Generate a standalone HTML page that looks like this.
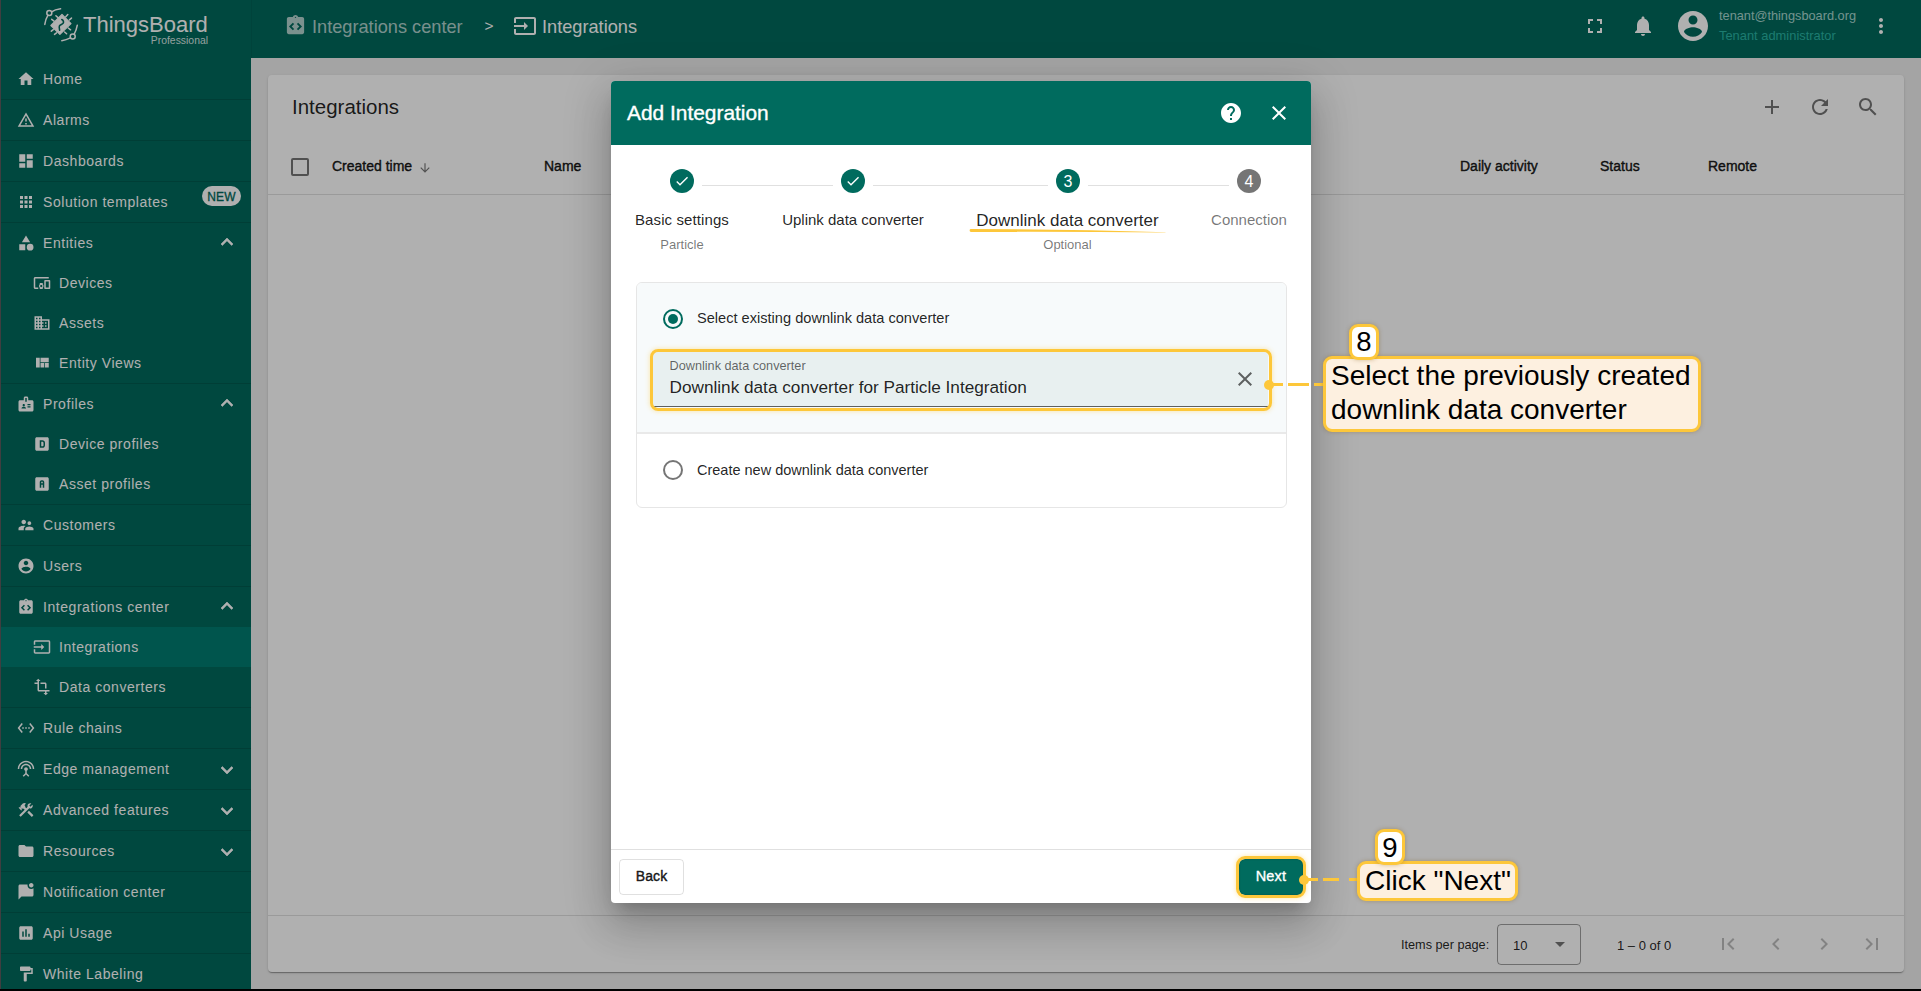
<!DOCTYPE html>
<html><head><meta charset="utf-8">
<style>
*{box-sizing:border-box;margin:0;padding:0}
html,body{width:1921px;height:991px;overflow:hidden;background:#000;font-family:"Liberation Sans",sans-serif}
.a{position:absolute}
.t{position:absolute;white-space:nowrap;line-height:1}
svg{position:absolute;display:block;overflow:visible}
</style></head><body>

<div class="a" style="left:0;top:0;width:1921px;height:989px;background:#eeeeee;overflow:hidden">
<div class="a" style="left:1px;top:0px;width:1920px;height:58px;background:#00695c"></div>
<div class="a" style="left:1px;top:58px;width:250px;height:931px;background:#00695c"></div>
<div class="a" style="left:0px;top:0px;width:1px;height:989px;background:#6a6a6a"></div>
<svg style="left:40px;top:5px;width:45px;height:40px" viewBox="0 0 45 40">
<g fill="none" stroke="#fff" stroke-width="1.5" stroke-linecap="round">
<circle cx="9.3" cy="8.1" r="2.5"/><circle cx="32.7" cy="31.4" r="2.5"/>
<path d="M11.6 6.8 Q15 4.6 20.6 3.8"/><path d="M7.9 10.4 Q5.6 14 4.8 19.4"/>
<path d="M34.2 29.1 Q36.4 25.2 37.3 20.2"/><path d="M30.4 32.8 Q26.2 35 21.8 35.7"/>
<path d="M15.9 10.7L18.3 12.9M11.7 14.3L14.1 16.1M27.8 9.5L25.8 11.7M31.5 13.1L29.4 14.9M11.3 26.2L13.3 24.6M14.5 29.4L16.5 27.8M30.6 24.8L28.2 23M26.6 28.8L24.6 27"/>
</g>
<path d="M22 9.4 L31 18.6 L19.9 29.4 L10.9 20.5 Z" fill="#fff" stroke="#fff" stroke-width="1.2" stroke-linejoin="round"/>
<path d="M21.8 14.6 C23.2 15.2 24 16.8 23.2 18.2 C22.6 19.3 20.6 19.6 19.6 20.6 C19 21.4 19.2 23.4 19.6 25.2" fill="none" stroke="#00695c" stroke-width="1.6" stroke-linecap="round"/>
</svg>
<div class="t" style="left:83px;top:14.38px;font-size:22px;color:#fff;font-weight:400;letter-spacing:0px;">ThingsBoard</div>
<div class="t" style="left:-392px;width:600px;text-align:right;top:36.40px;font-size:10.4px;color:rgba(255,255,255,0.85);font-weight:400;letter-spacing:0px;">Professional</div>
<svg style="left:283.5px;top:14px;width:23px;height:23px" viewBox="0 0 24 24"><path fill="rgba(255,255,255,0.7)" d="M19 3h-4.18C14.4 1.84 13.3 1 12 1s-2.4.84-2.82 2H5c-1.1 0-2 .9-2 2v14c0 1.1.9 2 2 2h14c1.1 0 2-.9 2-2V5c0-1.1-.9-2-2-2zM12 2.75c.41 0 .75.34.75.75s-.34.75-.75.75-.75-.34-.75-.75.34-.75.75-.75zM10.6 15.6L9.2 17l-4-4 4-4 1.4 1.4L8 13l2.6 2.6zm4.2 1.4l-1.4-1.4L16 13l-2.6-2.6L14.8 9l4 4-4 4z"/></svg>
<div class="t" style="left:312px;top:17.59px;font-size:18.2px;color:rgba(255,255,255,0.7);font-weight:400;letter-spacing:0px;">Integrations center</div>
<div class="t" style="left:189px;width:600px;text-align:center;top:18.38px;font-size:15.5px;color:#fff;font-weight:400;letter-spacing:0px;">&gt;</div>
<svg style="left:513px;top:14px;width:24px;height:24px" viewBox="0 0 24 24"><path fill="#fff" d="M21 3.01H3c-1.1 0-2 .9-2 2V9h2V4.99h18v14.03H3V15H1v4.01c0 1.1.9 1.98 2 1.98h18c1.1 0 2-.88 2-1.98v-14c0-1.11-.9-2-2-2zM11 16l4-4-4-4v3H1v2h10v3z"/></svg>
<div class="t" style="left:542px;top:17.59px;font-size:18.2px;color:#fff;font-weight:400;letter-spacing:0px;">Integrations</div>
<svg style="left:1583px;top:14px;width:24px;height:24px" viewBox="0 0 24 24"><path fill="#fff" d="M7 14H5v5h5v-2H7v-3zm-2-4h2V7h3V5H5v5zm12 7h-3v2h5v-5h-2v3zM14 5v2h3v3h2V5h-5z"/></svg>
<svg style="left:1631px;top:14px;width:24px;height:24px" viewBox="0 0 24 24"><path fill="#fff" d="M12 22c1.1 0 2-.9 2-2h-4c0 1.1.89 2 2 2zm6-6v-5c0-3.07-1.64-5.64-4.5-6.32V4c0-.83-.67-1.5-1.5-1.5s-1.5.67-1.5 1.5v.68C7.63 5.36 6 7.92 6 11v5l-2 2v1h16v-1l-2-2z"/></svg>
<svg style="left:1675px;top:8px;width:36px;height:36px" viewBox="0 0 24 24"><path fill="#fff" d="M12 2C6.48 2 2 6.48 2 12s4.48 10 10 10 10-4.48 10-10S17.52 2 12 2zm0 3c1.66 0 3 1.34 3 3s-1.34 3-3 3-3-1.34-3-3 1.34-3 3-3zm0 14.2c-2.5 0-4.71-1.28-6-3.22.03-1.99 4-3.08 6-3.08 1.99 0 5.970 1.09 6 3.08-1.29 1.94-3.5 3.22-6 3.22z"/></svg>
<div class="t" style="left:1719px;top:10.21px;font-size:12.75px;color:#a8d6cf;font-weight:400;letter-spacing:0px;">tenant@thingsboard.org</div>
<div class="t" style="left:1719px;top:29.58px;font-size:12.9px;color:#2ab3a3;font-weight:400;letter-spacing:0px;">Tenant administrator</div>
<svg style="left:1869px;top:14px;width:24px;height:24px" viewBox="0 0 24 24"><path fill="#fff" d="M12 8c1.1 0 2-.9 2-2s-.9-2-2-2-2 .9-2 2 .9 2 2 2zm0 2c-1.1 0-2 .9-2 2s.9 2 2 2 2-.9 2-2-.9-2-2-2zm0 6c-1.1 0-2 .9-2 2s.9 2 2 2 2-.9 2-2-.9-2-2-2z"/></svg>
<div class="a" style="left:251px;top:0px;width:1px;height:58px;background:rgba(0,0,0,0.06)"></div>
<div class="a" style="left:1px;top:99px;width:250px;height:1px;background:rgba(0,0,0,0.14)"></div>
<div class="a" style="left:1px;top:140px;width:250px;height:1px;background:rgba(0,0,0,0.14)"></div>
<div class="a" style="left:1px;top:181px;width:250px;height:1px;background:rgba(0,0,0,0.14)"></div>
<div class="a" style="left:1px;top:222px;width:250px;height:1px;background:rgba(0,0,0,0.14)"></div>
<div class="a" style="left:1px;top:383px;width:250px;height:1px;background:rgba(0,0,0,0.14)"></div>
<div class="a" style="left:1px;top:504px;width:250px;height:1px;background:rgba(0,0,0,0.14)"></div>
<div class="a" style="left:1px;top:545px;width:250px;height:1px;background:rgba(0,0,0,0.14)"></div>
<div class="a" style="left:1px;top:586px;width:250px;height:1px;background:rgba(0,0,0,0.14)"></div>
<div class="a" style="left:1px;top:707px;width:250px;height:1px;background:rgba(0,0,0,0.14)"></div>
<div class="a" style="left:1px;top:748px;width:250px;height:1px;background:rgba(0,0,0,0.14)"></div>
<div class="a" style="left:1px;top:789px;width:250px;height:1px;background:rgba(0,0,0,0.14)"></div>
<div class="a" style="left:1px;top:830px;width:250px;height:1px;background:rgba(0,0,0,0.14)"></div>
<div class="a" style="left:1px;top:871px;width:250px;height:1px;background:rgba(0,0,0,0.14)"></div>
<div class="a" style="left:1px;top:912px;width:250px;height:1px;background:rgba(0,0,0,0.14)"></div>
<div class="a" style="left:1px;top:953px;width:250px;height:1px;background:rgba(0,0,0,0.14)"></div>
<div class="a" style="left:1px;top:627px;width:250px;height:40px;background:#007c70"></div>
<svg style="left:17px;top:70px;width:18px;height:18px" viewBox="0 0 24 24"><path fill="#fff" d="M10 20v-6h4v6h5v-8h3L12 3 2 12h3v8z"/></svg>
<div class="t" style="left:43px;top:72.15px;font-size:14px;color:#fff;font-weight:400;letter-spacing:0.55px;">Home</div>
<svg style="left:17px;top:111px;width:18px;height:18px" viewBox="0 0 24 24"><path fill="#fff" d="M12 5.99L19.53 19H4.47L12 5.99M12 2L1 21h22L12 2zm1 14h-2v2h2v-2zm0-6h-2v4h2v-4z"/></svg>
<div class="t" style="left:43px;top:113.15px;font-size:14px;color:#fff;font-weight:400;letter-spacing:0.55px;">Alarms</div>
<svg style="left:17px;top:152px;width:18px;height:18px" viewBox="0 0 24 24"><path fill="#fff" d="M3 13h8V3H3v10zm0 8h8v-6H3v6zm10 0h8V11h-8v10zm0-18v6h8V3h-8z"/></svg>
<div class="t" style="left:43px;top:154.15px;font-size:14px;color:#fff;font-weight:400;letter-spacing:0.55px;">Dashboards</div>
<svg style="left:17px;top:193px;width:18px;height:18px" viewBox="0 0 24 24"><path fill="#fff" d="M4 8h4V4H4v4zm6 12h4v-4h-4v4zm-6 0h4v-4H4v4zm0-6h4v-4H4v4zm6 0h4v-4h-4v4zm6-10v4h4V4h-4zm-6 4h4V4h-4v4zm6 6h4v-4h-4v4zm0 6h4v-4h-4v4z"/></svg>
<div class="t" style="left:43px;top:195.15px;font-size:14px;color:#fff;font-weight:400;letter-spacing:0.55px;">Solution templates</div>
<svg style="left:17px;top:234px;width:18px;height:18px" viewBox="0 0 24 24"><path fill="#fff" d="M12 2l-5.5 9h11zM17.5 13a4.5 4.5 0 1 0 0 9a4.5 4.5 0 1 0 0-9zM3 13.5h8v8H3z"/></svg>
<div class="t" style="left:43px;top:236.15px;font-size:14px;color:#fff;font-weight:400;letter-spacing:0.55px;">Entities</div>
<svg style="left:215px;top:230px;width:24px;height:24px" viewBox="0 0 24 24" stroke="#fff" stroke-width="0.6"><path fill="#fff" d="M12 8l-6 6 1.41 1.41L12 10.83l4.59 4.58L18 14z"/></svg>
<svg style="left:33px;top:274px;width:18px;height:18px" viewBox="0 0 24 24"><path fill="#fff" d="M3 6h18V4H3c-1.1 0-2 .9-2 2v12c0 1.1.9 2 2 2h4v-2H3V6zm10 6H9v1.78c-.61.55-1 1.33-1 2.22s.39 1.67 1 2.22V20h4v-1.78c.61-.55 1-1.34 1-2.22s-.39-1.67-1-2.22V12zm-2 5.5c-.83 0-1.5-.67-1.5-1.5s.67-1.5 1.5-1.5 1.5.67 1.5 1.5-.67 1.5-1.5 1.5zM22 8h-6c-.5 0-1 .5-1 1v10c0 .5.5 1 1 1h6c.5 0 1-.5 1-1V9c0-.5-.5-1-1-1zm-1 10h-4v-8h4v8z"/></svg>
<div class="t" style="left:59px;top:276.15px;font-size:14px;color:#fff;font-weight:400;letter-spacing:0.55px;">Devices</div>
<svg style="left:33px;top:314px;width:18px;height:18px" viewBox="0 0 24 24"><path fill="#fff" d="M12 7V3H2v18h20V7H12zM6 19H4v-2h2v2zm0-4H4v-2h2v2zm0-4H4V9h2v2zm0-4H4V5h2v2zm4 12H8v-2h2v2zm0-4H8v-2h2v2zm0-4H8V9h2v2zm0-4H8V5h2v2zm10 12h-8v-2h2v-2h-2v-2h2v-2h-2V9h8v10zm-2-8h-2v2h2v-2zm0 4h-2v2h2v-2z"/></svg>
<div class="t" style="left:59px;top:316.15px;font-size:14px;color:#fff;font-weight:400;letter-spacing:0.55px;">Assets</div>
<svg style="left:33px;top:354px;width:18px;height:18px" viewBox="0 0 24 24"><path fill="#fff" d="M10 18h5v-6h-5v6zm-6 0h5V5H4v13zm12 0h5v-6h-5v6zM10 5v6h11V5H10z"/></svg>
<div class="t" style="left:59px;top:356.15px;font-size:14px;color:#fff;font-weight:400;letter-spacing:0.55px;">Entity Views</div>
<svg style="left:17px;top:395px;width:18px;height:18px" viewBox="0 0 24 24"><path fill="#fff" d="M20 7h-5V4c0-1.1-.9-2-2-2h-2c-1.1 0-2 .9-2 2v3H4c-1.1 0-2 .9-2 2v11c0 1.1.9 2 2 2h16c1.1 0 2-.9 2-2V9c0-1.1-.9-2-2-2zM9 12c.83 0 1.5.67 1.5 1.5S9.830 15 9 15s-1.5-.67-1.5-1.5S8.17 12 9 12zm3 6H6v-.43c0-.6.36-1.15.92-1.39.64-.28 1.34-.43 2.08-.43s1.44.15 2.08.43c.55.24.92.78.92 1.39V18zm1-9h-2V4h2v5zm5 7.5h-4V15h4v1.5zm0-3h-4V12h4v1.5z"/></svg>
<div class="t" style="left:43px;top:397.15px;font-size:14px;color:#fff;font-weight:400;letter-spacing:0.55px;">Profiles</div>
<svg style="left:215px;top:391px;width:24px;height:24px" viewBox="0 0 24 24" stroke="#fff" stroke-width="0.6"><path fill="#fff" d="M12 8l-6 6 1.41 1.41L12 10.83l4.59 4.58L18 14z"/></svg>
<svg style="left:33px;top:435px;width:18px;height:18px" viewBox="0 0 24 24"><path fill="#fff" d="M5 3h14c1.1 0 2 .9 2 2v14c0 1.1-.9 2-2 2H5c-1.1 0-2-.9-2-2V5c0-1.1.9-2 2-2zM9 7v10h3.5c2 0 3.5-1.5 3.5-3.5v-3C16 8.5 14.5 7 12.5 7H9zm2 2h1.5c.8 0 1.5.7 1.5 1.5v3c0 .8-.7 1.5-1.5 1.5H11V9z"/></svg>
<div class="t" style="left:59px;top:437.15px;font-size:14px;color:#fff;font-weight:400;letter-spacing:0.55px;">Device profiles</div>
<svg style="left:33px;top:475px;width:18px;height:18px" viewBox="0 0 24 24"><path fill="#fff" d="M5 3h14c1.1 0 2 .9 2 2v14c0 1.1-.9 2-2 2H5c-1.1 0-2-.9-2-2V5c0-1.1.9-2 2-2zM9 17h2v-4h2v4h2V9.5C15 8.1 13.9 7 12.5 7h-1C10.1 7 9 8.1 9 9.5V17zm2-6V9.5c0-.3.2-.5.5-.5h1c.3 0 .5.2.5.5V11h-2z"/></svg>
<div class="t" style="left:59px;top:477.15px;font-size:14px;color:#fff;font-weight:400;letter-spacing:0.55px;">Asset profiles</div>
<svg style="left:17px;top:516px;width:18px;height:18px" viewBox="0 0 24 24"><path fill="#fff" d="M16.5 12c1.38 0 2.49-1.12 2.49-2.5S17.88 7 16.5 7C15.12 7 14 8.12 14 9.5s1.12 2.5 2.5 2.5zM9 11c1.66 0 2.99-1.34 2.99-3S10.66 5 9 5C7.34 5 6 6.34 6 8s1.34 3 3 3zm7.5 3c-1.83 0-5.5.92-5.5 2.75V19h11v-2.25c0-1.830-3.67-2.75-5.5-2.75zM9 13c-2.33 0-7 1.17-7 3.5V19h7v-2.25c0-.85.33-2.34 2.37-3.47C10.5 13.1 9.66 13 9 13z"/></svg>
<div class="t" style="left:43px;top:518.15px;font-size:14px;color:#fff;font-weight:400;letter-spacing:0.55px;">Customers</div>
<svg style="left:17px;top:557px;width:18px;height:18px" viewBox="0 0 24 24"><path fill="#fff" d="M12 2C6.48 2 2 6.48 2 12s4.48 10 10 10 10-4.48 10-10S17.52 2 12 2zm0 3c1.66 0 3 1.34 3 3s-1.34 3-3 3-3-1.34-3-3 1.34-3 3-3zm0 14.2c-2.5 0-4.71-1.28-6-3.22.03-1.99 4-3.08 6-3.08 1.99 0 5.970 1.09 6 3.08-1.29 1.94-3.5 3.22-6 3.22z"/></svg>
<div class="t" style="left:43px;top:559.15px;font-size:14px;color:#fff;font-weight:400;letter-spacing:0.55px;">Users</div>
<svg style="left:17px;top:598px;width:18px;height:18px" viewBox="0 0 24 24"><path fill="#fff" d="M19 3h-4.18C14.4 1.84 13.3 1 12 1s-2.4.84-2.82 2H5c-1.1 0-2 .9-2 2v14c0 1.1.9 2 2 2h14c1.1 0 2-.9 2-2V5c0-1.1-.9-2-2-2zM12 2.75c.41 0 .75.34.75.75s-.34.75-.75.75-.75-.34-.75-.75.34-.75.75-.75zM10.6 15.6L9.2 17l-4-4 4-4 1.4 1.4L8 13l2.6 2.6zm4.2 1.4l-1.4-1.4L16 13l-2.6-2.6L14.8 9l4 4-4 4z"/></svg>
<div class="t" style="left:43px;top:600.15px;font-size:14px;color:#fff;font-weight:400;letter-spacing:0.55px;">Integrations center</div>
<svg style="left:215px;top:594px;width:24px;height:24px" viewBox="0 0 24 24" stroke="#fff" stroke-width="0.6"><path fill="#fff" d="M12 8l-6 6 1.41 1.41L12 10.83l4.59 4.58L18 14z"/></svg>
<svg style="left:33px;top:638px;width:18px;height:18px" viewBox="0 0 24 24"><path fill="#fff" d="M21 3.01H3c-1.1 0-2 .9-2 2V9h2V4.99h18v14.03H3V15H1v4.01c0 1.1.9 1.98 2 1.98h18c1.1 0 2-.88 2-1.98v-14c0-1.11-.9-2-2-2zM11 16l4-4-4-4v3H1v2h10v3z"/></svg>
<div class="t" style="left:59px;top:640.15px;font-size:14px;color:#fff;font-weight:400;letter-spacing:0.55px;">Integrations</div>
<svg style="left:33px;top:678px;width:18px;height:18px" viewBox="0 0 24 24"><path fill="#fff" d="M22 18v-2H8V4h2L7 1 4 4h2v2H2v2h4v8c0 1.1.9 2 2 2h8v2h-2l3 3 3-3h-2v-2h4zM10 8h6v6h2V8c0-1.1-.9-2-2-2h-6v2z"/></svg>
<div class="t" style="left:59px;top:680.15px;font-size:14px;color:#fff;font-weight:400;letter-spacing:0.55px;">Data converters</div>
<svg style="left:17px;top:719px;width:18px;height:18px" viewBox="0 0 24 24"><path fill="#fff" d="M7.77 6.76L6.23 5.48.82 12l5.41 6.52 1.54-1.28L3.42 12l4.35-5.24zM7 13h2v-2H7v2zm10-2h-2v2h2v-2zm-6 2h2v-2h-2v2zm6.77-7.52l-1.54 1.28L20.58 12l-4.35 5.24 1.54 1.28L23.18 12l-5.41-6.52z"/></svg>
<div class="t" style="left:43px;top:721.15px;font-size:14px;color:#fff;font-weight:400;letter-spacing:0.55px;">Rule chains</div>
<svg style="left:17px;top:760px;width:18px;height:18px" viewBox="0 0 24 24"><path fill="#fff" d="M12 5c-3.87 0-7 3.13-7 7h2c0-2.76 2.24-5 5-5s5 2.24 5 5h2c0-3.87-3.13-7-7-7zm1 9.29c.88-.39 1.5-1.26 1.5-2.29 0-1.38-1.12-2.5-2.5-2.5S9.5 10.62 9.5 12c0 1.02.62 1.9 1.5 2.29v3.3L7.59 21 9 22.41l3-3 3 3L16.41 21 13 17.59v-3.3zM12 1C5.93 1 1 5.93 1 12h2c0-4.97 4.03-9 9-9s9 4.03 9 9h2c0-6.07-4.93-11-11-11z"/></svg>
<div class="t" style="left:43px;top:762.15px;font-size:14px;color:#fff;font-weight:400;letter-spacing:0.55px;">Edge management</div>
<svg style="left:215px;top:757.5px;width:24px;height:24px" viewBox="0 0 24 24" stroke="#fff" stroke-width="0.6"><path fill="#fff" d="M16.59 8.59L12 13.17 7.41 8.59 6 10l6 6 6-6z"/></svg>
<svg style="left:17px;top:801px;width:18px;height:18px" viewBox="0 0 24 24"><path fill="#fff" d="M13.78 15.3l6 6 2.11-2.16-6-6zM17.5 10c1.93 0 3.5-1.57 3.5-3.5 0-.58-.16-1.12-.41-1.6l-2.7 2.7-1.49-1.49 2.7-2.7c-.48-.25-1.02-.41-1.6-.41C15.57 3 14 4.57 14 6.5c0 .41.08.8.21 1.16l-1.85 1.85-1.78-1.78.71-.71-1.41-1.41L12 3.49c-1.17-1.17-3.07-1.17-4.24 0L4.22 7.03l1.41 1.41H2.81l-.71.71 3.54 3.54.71-.71V9.15l1.41 1.41.71-.71 1.78 1.78-7.41 7.41 2.12 2.12L16.34 9.79c.36.13.75.21 1.16.21z"/></svg>
<div class="t" style="left:43px;top:803.15px;font-size:14px;color:#fff;font-weight:400;letter-spacing:0.55px;">Advanced features</div>
<svg style="left:215px;top:798.5px;width:24px;height:24px" viewBox="0 0 24 24" stroke="#fff" stroke-width="0.6"><path fill="#fff" d="M16.59 8.59L12 13.17 7.41 8.59 6 10l6 6 6-6z"/></svg>
<svg style="left:17px;top:842px;width:18px;height:18px" viewBox="0 0 24 24"><path fill="#fff" d="M10 4H4c-1.1 0-1.99.9-1.99 2L2 18c0 1.1.9 2 2 2h16c1.1 0 2-.9 2-2V8c0-1.1-.9-2-2-2h-8l-2-2z"/></svg>
<div class="t" style="left:43px;top:844.15px;font-size:14px;color:#fff;font-weight:400;letter-spacing:0.55px;">Resources</div>
<svg style="left:215px;top:839.5px;width:24px;height:24px" viewBox="0 0 24 24" stroke="#fff" stroke-width="0.6"><path fill="#fff" d="M16.59 8.59L12 13.17 7.41 8.59 6 10l6 6 6-6z"/></svg>
<svg style="left:17px;top:883px;width:18px;height:18px" viewBox="0 0 24 24"><path fill="#fff" d="M22 6.98V16c0 1.1-.9 2-2 2H6l-4 4V4c0-1.1.9-2 2-2h10.1c-.06.32-.1.66-.1 1 0 2.76 2.24 5 5 5 1.13 0 2.16-.39 3-1.02zM16 3c0 1.66 1.34 3 3 3s3-1.34 3-3-1.34-3-3-3-3 1.34-3 3z"/></svg>
<div class="t" style="left:43px;top:885.15px;font-size:14px;color:#fff;font-weight:400;letter-spacing:0.55px;">Notification center</div>
<svg style="left:17px;top:924px;width:18px;height:18px" viewBox="0 0 24 24"><path fill="#fff" d="M19 3H5c-1.1 0-2 .9-2 2v14c0 1.1.9 2 2 2h14c1.1 0 2-.9 2-2V5c0-1.1-.9-2-2-2zM9 17H7v-7h2v7zm4 0h-2V7h2v10zm4 0h-2v-4h2v4z"/></svg>
<div class="t" style="left:43px;top:926.15px;font-size:14px;color:#fff;font-weight:400;letter-spacing:0.55px;">Api Usage</div>
<svg style="left:17px;top:965px;width:18px;height:18px" viewBox="0 0 24 24"><path fill="#fff" d="M18 4V3c0-.55-.45-1-1-1H5c-.55 0-1 .45-1 1v4c0 .55.45 1 1 1h12c.55 0 1-.45 1-1V6h1v4H9v11c0 .55.45 1 1 1h2c.55 0 1-.45 1-1v-9h8V4h-3z"/></svg>
<div class="t" style="left:43px;top:967.15px;font-size:14px;color:#fff;font-weight:400;letter-spacing:0.55px;">White Labeling</div>
<div class="a" style="left:202px;top:186px;width:39px;height:20px;background:#fff;border-radius:10px"></div>
<div class="t" style="left:-78.5px;width:600px;text-align:center;top:190.84px;font-size:12px;color:#00695c;font-weight:400;letter-spacing:0.2px;-webkit-text-stroke:0.3px #00695c">NEW</div>
<div class="a" style="left:268px;top:75px;width:1636px;height:897px;background:#fff;border-radius:4px;box-shadow:0 2px 1px -1px rgba(0,0,0,.2),0 1px 1px 0 rgba(0,0,0,.14),0 1px 3px 0 rgba(0,0,0,.12)"></div>
<div class="t" style="left:292px;top:96.65px;font-size:20.5px;color:rgba(0,0,0,0.87);font-weight:400;letter-spacing:0px;">Integrations</div>
<svg style="left:1760px;top:95px;width:24px;height:24px" viewBox="0 0 24 24"><path fill="rgba(0,0,0,0.54)" d="M19 13h-6v6h-2v-6H5v-2h6V5h2v6h6v2z"/></svg>
<svg style="left:1808px;top:95px;width:24px;height:24px" viewBox="0 0 24 24"><path fill="rgba(0,0,0,0.54)" d="M17.65 6.35C16.2 4.9 14.21 4 12 4c-4.42 0-7.99 3.58-7.99 8s3.57 8 7.99 8c3.73 0 6.84-2.55 7.730-6h-2.08c-.82 2.33-3.04 4-5.65 4-3.31 0-6-2.69-6-6s2.69-6 6-6c1.66 0 3.14.69 4.22 1.78L13 11h7V4l-2.35 2.35z"/></svg>
<svg style="left:1856px;top:95px;width:24px;height:24px" viewBox="0 0 24 24"><path fill="rgba(0,0,0,0.54)" d="M15.5 14h-.79l-.28-.27C15.41 12.59 16 11.11 16 9.5 16 5.91 13.09 3 9.5 3S3 5.91 3 9.5 5.91 16 9.5 16c1.61 0 3.09-.59 4.23-1.57l.27.28v.79l5 4.99L20.49 19l-4.99-5zm-6 0C7.01 14 5 11.99 5 9.5S7.01 5 9.5 5 14 7.01 14 9.5 11.99 14 9.5 14z"/></svg>
<div class="a" style="left:291px;top:158px;width:18px;height:18px;border:2px solid rgba(0,0,0,0.54);border-radius:2px"></div>
<div class="t" style="left:332px;top:159.15px;font-size:14px;color:rgba(0,0,0,0.87);font-weight:400;letter-spacing:0px;-webkit-text-stroke:0.45px rgba(0,0,0,0.87)">Created time</div>
<svg style="left:418px;top:161px;width:14px;height:14px" viewBox="0 0 24 24"><path fill="rgba(0,0,0,0.54)" d="M20 12l-1.41-1.41L13 16.17V4h-2v12.17l-5.58-5.59L4 12l8 8 8-8z"/></svg>
<div class="t" style="left:544px;top:159.15px;font-size:14px;color:rgba(0,0,0,0.87);font-weight:400;letter-spacing:0px;-webkit-text-stroke:0.45px rgba(0,0,0,0.87)">Name</div>
<div class="t" style="left:1460px;top:159.15px;font-size:14px;color:rgba(0,0,0,0.87);font-weight:400;letter-spacing:0px;-webkit-text-stroke:0.45px rgba(0,0,0,0.87)">Daily activity</div>
<div class="t" style="left:1600px;top:159.15px;font-size:14px;color:rgba(0,0,0,0.87);font-weight:400;letter-spacing:0px;-webkit-text-stroke:0.45px rgba(0,0,0,0.87)">Status</div>
<div class="t" style="left:1708px;top:159.15px;font-size:14px;color:rgba(0,0,0,0.87);font-weight:400;letter-spacing:0px;-webkit-text-stroke:0.45px rgba(0,0,0,0.87)">Remote</div>
<div class="a" style="left:268px;top:194px;width:1636px;height:1px;background:rgba(0,0,0,0.12)"></div>
<div class="a" style="left:268px;top:915px;width:1636px;height:1px;background:rgba(0,0,0,0.12)"></div>
<div class="t" style="left:1401px;top:939.25px;font-size:12.7px;color:rgba(0,0,0,0.87);font-weight:400;letter-spacing:0px;">Items per page:</div>
<div class="a" style="left:1497px;top:924px;width:84px;height:41px;border:1px solid rgba(0,0,0,0.38);border-radius:4px"></div>
<div class="t" style="left:1513px;top:939.00px;font-size:13px;color:rgba(0,0,0,0.87);font-weight:400;letter-spacing:0px;">10</div>
<svg style="left:1548px;top:932px;width:24px;height:24px" viewBox="0 0 24 24"><path fill="rgba(0,0,0,0.54)" d="M7 10l5 5 5-5z"/></svg>
<div class="t" style="left:1617px;top:939.00px;font-size:13px;color:rgba(0,0,0,0.87);font-weight:400;letter-spacing:0px;">1 – 0 of 0</div>
<svg style="left:1716px;top:932px;width:24px;height:24px" viewBox="0 0 24 24"><path fill="rgba(0,0,0,0.26)" d="M18.41 16.59L13.82 12l4.59-4.59L17 6l-6 6 6 6zM6 6h2v12H6z"/></svg>
<svg style="left:1764px;top:932px;width:24px;height:24px" viewBox="0 0 24 24"><path fill="rgba(0,0,0,0.26)" d="M15.41 7.41L14 6l-6 6 6 6 1.41-1.41L10.83 12z"/></svg>
<svg style="left:1812px;top:932px;width:24px;height:24px" viewBox="0 0 24 24"><path fill="rgba(0,0,0,0.26)" d="M10 6L8.59 7.41 13.17 12l-4.58 4.59L10 18l6-6z"/></svg>
<svg style="left:1860px;top:932px;width:24px;height:24px" viewBox="0 0 24 24"><path fill="rgba(0,0,0,0.26)" d="M5.59 7.410L10.18 12l-4.59 4.59L7 18l6-6-6-6zM16 6h2v12h-2z"/></svg>
</div>
<div class="a" style="left:0px;top:0px;width:1921px;height:989px;background:rgba(0,0,0,0.31)"></div>
<div class="a" style="left:0px;top:0px;width:1px;height:989px;background:#3f3e40"></div>
<div class="a" style="left:611px;top:81px;width:700px;height:822px;background:#fff;border-radius:4px;overflow:hidden;box-shadow:0 11px 15px -7px rgba(0,0,0,.2),0 24px 38px 3px rgba(0,0,0,.14),0 9px 46px 8px rgba(0,0,0,.12)">
</div>
<div class="a" style="left:611px;top:81px;width:700px;height:64px;background:#006b5e;border-radius:4px 4px 0 0"></div>
<div class="t" style="left:627px;top:103.31px;font-size:20.9px;color:#fff;font-weight:400;letter-spacing:0px;-webkit-text-stroke:0.35px #fff">Add Integration</div>
<svg style="left:1219px;top:101px;width:24px;height:24px" viewBox="0 0 24 24"><path fill="#fff" d="M12 2C6.48 2 2 6.48 2 12s4.48 10 10 10 10-4.48 10-10S17.52 2 12 2zm1 17h-2v-2h2v2zm2.07-7.75l-.9.92C13.45 12.9 13 13.5 13 15h-2v-.5c0-1.1.45-2.1 1.17-2.83l1.24-1.26c.37-.36.59-.86.59-1.41 0-1.1-.9-2-2-2s-2 .9-2 2H8c0-2.21 1.79-4 4-4s4 1.79 4 4c0 .88-.36 1.68-.93 2.25z"/></svg>
<svg style="left:1267px;top:101px;width:24px;height:24px" viewBox="0 0 24 24"><path fill="#fff" d="M19 6.41L17.59 5 12 10.59 6.41 5 5 6.41 10.59 12 5 17.59 6.41 19 12 13.41 17.59 19 19 17.59 13.41 12z"/></svg>
<div class="a" style="left:670px;top:169px;width:24px;height:24px;background:#006b5e;border-radius:50%"></div>
<svg style="left:674px;top:173px;width:16px;height:16px" viewBox="0 0 24 24"><path fill="#fff" d="M9 16.17L4.83 12l-1.42 1.41L9 19 21 7l-1.41-1.41z"/></svg>
<div class="a" style="left:841px;top:169px;width:24px;height:24px;background:#006b5e;border-radius:50%"></div>
<svg style="left:845px;top:173px;width:16px;height:16px" viewBox="0 0 24 24"><path fill="#fff" d="M9 16.17L4.83 12l-1.42 1.41L9 19 21 7l-1.41-1.41z"/></svg>
<div class="a" style="left:1056px;top:169px;width:24px;height:24px;background:#006b5e;border-radius:50%"></div>
<div class="t" style="left:768px;width:600px;text-align:center;top:173.96px;font-size:16px;color:#fff;font-weight:400;letter-spacing:0px;">3</div>
<div class="a" style="left:1237px;top:169px;width:24px;height:24px;background:#757575;border-radius:50%"></div>
<div class="t" style="left:949px;width:600px;text-align:center;top:173.96px;font-size:16px;color:#fff;font-weight:400;letter-spacing:0px;">4</div>
<div class="a" style="left:702px;top:185px;width:131px;height:1px;background:rgba(0,0,0,0.12)"></div>
<div class="a" style="left:873px;top:185px;width:175px;height:1px;background:rgba(0,0,0,0.12)"></div>
<div class="a" style="left:1088px;top:185px;width:141px;height:1px;background:rgba(0,0,0,0.12)"></div>
<div class="t" style="left:382px;width:600px;text-align:center;top:212.30px;font-size:15px;color:rgba(0,0,0,0.87);font-weight:400;letter-spacing:0.1px;">Basic settings</div>
<div class="t" style="left:382px;width:600px;text-align:center;top:237.50px;font-size:13px;color:rgba(0,0,0,0.54);font-weight:400;letter-spacing:0px;">Particle</div>
<div class="t" style="left:553px;width:600px;text-align:center;top:212.30px;font-size:15px;color:rgba(0,0,0,0.87);font-weight:400;letter-spacing:0px;">Uplink data converter</div>
<div class="t" style="left:767.5px;width:600px;text-align:center;top:212.41px;font-size:17px;color:rgba(0,0,0,0.87);font-weight:400;letter-spacing:0px;">Downlink data converter</div>
<div class="t" style="left:767.5px;width:600px;text-align:center;top:237.50px;font-size:13px;color:rgba(0,0,0,0.54);font-weight:400;letter-spacing:0px;">Optional</div>
<div class="t" style="left:949px;width:600px;text-align:center;top:212.10px;font-size:15px;color:rgba(0,0,0,0.54);font-weight:400;letter-spacing:0px;">Connection</div>
<svg style="left:968px;top:226px;width:200px;height:10px" viewBox="0 0 200 10"><path d="M3 3.1 Q100 3.35 197.5 6.2 L197.5 6.6 Q100 5.35 3 5.9 A1.4 1.4 0 0 1 3 3.1Z" fill="#fdc73a"/></svg>
<div class="a" style="left:636px;top:282px;width:651px;height:226px;border:1px solid #e6e6e6;border-radius:6px;overflow:hidden"></div>
<div class="a" style="left:637px;top:283px;width:649px;height:149px;background:#f7fafb;border-radius:5px 5px 0 0"></div>
<div class="a" style="left:637px;top:432px;width:649px;height:2px;background:#e9e9e9"></div>
<div class="a" style="left:663px;top:309px;width:20px;height:20px;border:2px solid #006b5e;border-radius:50%"></div>
<div class="a" style="left:668px;top:314px;width:10px;height:10px;background:#006b5e;border-radius:50%"></div>
<div class="t" style="left:697px;top:310.64px;font-size:14.6px;color:rgba(0,0,0,0.87);font-weight:400;letter-spacing:0px;">Select existing downlink data converter</div>
<div class="a" style="left:653px;top:352px;width:615px;height:55px;background:#e8f0f0;border-radius:4px 4px 0 0"></div>
<div class="a" style="left:653px;top:406px;width:615px;height:1px;background:rgba(0,0,0,0.6)"></div>
<div class="t" style="left:669.5px;top:359.95px;font-size:12.7px;color:rgba(0,0,0,0.6);font-weight:400;letter-spacing:0px;">Downlink data converter</div>
<div class="t" style="left:669.5px;top:379.44px;font-size:17.2px;color:rgba(0,0,0,0.87);font-weight:400;letter-spacing:0px;">Downlink data converter for Particle Integration</div>
<svg style="left:1233px;top:367px;width:24px;height:24px" viewBox="0 0 24 24"><path fill="rgba(0,0,0,0.6)" d="M19 6.41L17.59 5 12 10.59 6.41 5 5 6.41 10.59 12 5 17.59 6.41 19 12 13.41 17.59 19 19 17.59 13.41 12z"/></svg>
<div class="a" style="left:650px;top:349px;width:622px;height:62px;border:3px solid #fdc73a;border-radius:8px;box-shadow:0 0 5px rgba(253,199,58,0.45)"></div>
<div class="a" style="left:663px;top:460px;width:20px;height:20px;border:2px solid rgba(0,0,0,0.54);border-radius:50%"></div>
<div class="t" style="left:697px;top:462.73px;font-size:14.5px;color:rgba(0,0,0,0.87);font-weight:400;letter-spacing:0px;">Create new downlink data converter</div>
<div class="a" style="left:611px;top:849px;width:700px;height:1px;background:rgba(0,0,0,0.12)"></div>
<div class="a" style="left:619px;top:859px;width:65px;height:36px;border:1px solid rgba(0,0,0,0.12);border-radius:4px"></div>
<div class="t" style="left:351.5px;width:600px;text-align:center;top:869.15px;font-size:14px;color:rgba(0,0,0,0.87);font-weight:400;letter-spacing:0.1px;-webkit-text-stroke:0.45px rgba(0,0,0,0.87)">Back</div>
<div class="a" style="left:1239px;top:859px;width:65px;height:36px;background:#006b5e;border-radius:6px"></div>
<div class="a" style="left:1236px;top:856px;width:70px;height:42px;border:3px solid #fdc73a;border-radius:9px;box-shadow:0 0 5px rgba(253,199,58,0.45), inset 0 0 2px rgba(0,0,0,0.25)"></div>
<div class="t" style="left:971px;width:600px;text-align:center;top:868.73px;font-size:14.5px;color:#fff;font-weight:400;letter-spacing:0.2px;-webkit-text-stroke:0.35px #fff">Next</div>
<div class="a" style="left:1269px;top:383.1px;width:14px;height:3px;background:#fdc73a"></div>
<div class="a" style="left:1288px;top:383.1px;width:21px;height:3px;background:#fdc73a"></div>
<div class="a" style="left:1314px;top:383.1px;width:11px;height:3px;background:#fdc73a"></div>
<div class="a" style="left:1264.3px;top:379.6px;width:10px;height:10px;border-radius:50%;background:#fdc73a"></div>
<div class="a" style="left:1323px;top:356px;width:378px;height:76px;background:#fdf0e0;border:3px solid #fdc73a;border-radius:9px;box-shadow:0 0 4px rgba(120,80,0,0.35)"></div>
<div class="a" style="left:1349px;top:324px;width:30px;height:36px;background:#fff;border:3px solid #fdc73a;border-radius:9px;box-shadow:0 0 4px rgba(120,80,0,0.35)"></div>
<div class="t" style="left:1064.0px;width:600px;text-align:center;top:328.22px;font-size:27.5px;color:#000;font-weight:400;letter-spacing:0px;">8</div>
<div class="t" style="left:1331px;top:361.70px;font-size:28px;color:#000;font-weight:400;letter-spacing:0px;">Select the previously created</div>
<div class="t" style="left:1331px;top:395.70px;font-size:28px;color:#000;font-weight:400;letter-spacing:0px;">downlink data converter</div>
<div class="a" style="left:1304px;top:878.0px;width:14px;height:3px;background:#fdc73a"></div>
<div class="a" style="left:1323px;top:878.0px;width:16px;height:3px;background:#fdc73a"></div>
<div class="a" style="left:1349px;top:878.0px;width:10px;height:3px;background:#fdc73a"></div>
<div class="a" style="left:1299.2px;top:874.5px;width:10px;height:10px;border-radius:50%;background:#fdc73a"></div>
<div class="a" style="left:1357px;top:861px;width:161px;height:40px;background:#fdf0e0;border:3px solid #fdc73a;border-radius:9px;box-shadow:0 0 4px rgba(120,80,0,0.35)"></div>
<div class="a" style="left:1375px;top:829px;width:30px;height:36px;background:#fff;border:3px solid #fdc73a;border-radius:9px;box-shadow:0 0 4px rgba(120,80,0,0.35)"></div>
<div class="t" style="left:1090.0px;width:600px;text-align:center;top:833.72px;font-size:27.5px;color:#000;font-weight:400;letter-spacing:0px;">9</div>
<div class="t" style="left:1365px;top:866.60px;font-size:28px;color:#000;font-weight:400;letter-spacing:0px;">Click "Next"</div>
<div class="a" style="left:0;top:989px;width:1921px;height:2px;background:#000"></div>
</body></html>
